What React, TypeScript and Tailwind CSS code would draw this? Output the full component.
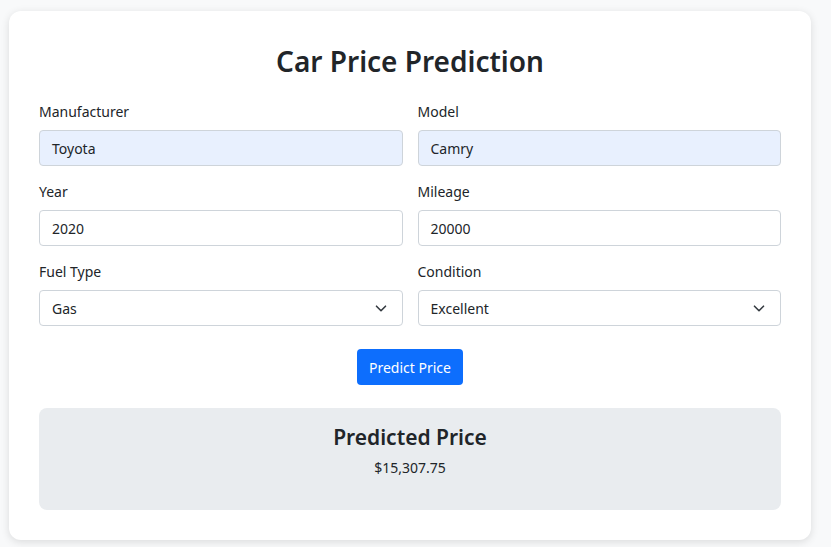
const font = { fontFamily: '"Noto Sans", "Open Sans", sans-serif' }

function Chevron() {
  return (
    <svg width="12" height="7" viewBox="0 0 12 7" fill="none" className="mr-[3px]">
      <path d="M1.5 1.2 6 5.7l4.5-4.5" stroke="#343a40" strokeWidth="1.6" strokeLinecap="round" strokeLinejoin="round" />
    </svg>
  )
}

function Field({
  label,
  value,
  filled,
  select,
}: {
  label: string
  value: string
  filled?: boolean
  select?: boolean
}) {
  return (
    <div className="flex flex-col">
      <label className="mb-[7px] text-[14px] leading-[22px] text-[#212529]">{label}</label>
      <div
        className={
          'flex h-[36px] items-center justify-between rounded-[4px] border border-[#ced4da] px-[12px] text-[14px] text-[#212529] ' +
          (filled ? 'bg-[#e8f0fe]' : 'bg-white')
        }
      >
        <span>{value}</span>
        {select && <Chevron />}
      </div>
    </div>
  )
}

export default function App() {
  return (
    <div className="min-h-[547px] bg-[#f8f9fa] px-[9px] pt-[11px]" style={font}>
      <div className="w-[802px] rounded-[12px] bg-white px-[30px] pt-[30px] pb-[30px] shadow-[0_2px_8px_rgba(0,0,0,0.12)]">
        <h2 className="mb-[20px] text-center text-[28px] font-semibold leading-[40px] text-[#212529]">
          Car Price Prediction
        </h2>
        <div className="grid grid-cols-2 gap-x-[15px] gap-y-[15px]">
          <Field label="Manufacturer" value="Toyota" filled />
          <Field label="Model" value="Camry" filled />
          <Field label="Year" value="2020" />
          <Field label="Mileage" value="20000" />
          <Field label="Fuel Type" value="Gas" select />
          <Field label="Condition" value="Excellent" select />
        </div>
        <div className="mt-[23px] flex justify-center">
          <button className="h-[36px] rounded-[4px] bg-[#0d6efd] px-[12px] text-[14px] text-white">
            Predict Price
          </button>
        </div>
        <div className="mt-[23px] flex h-[102px] flex-col items-center rounded-[8px] bg-[#e9ecef] pt-[14px]">
          <h4 className="text-[21px] font-semibold leading-[30px] text-[#212529]">Predicted Price</h4>
          <p className="mt-[6px] text-[14px] leading-[20px] text-[#212529]">$15,307.75</p>
        </div>
      </div>
    </div>
  )
}
